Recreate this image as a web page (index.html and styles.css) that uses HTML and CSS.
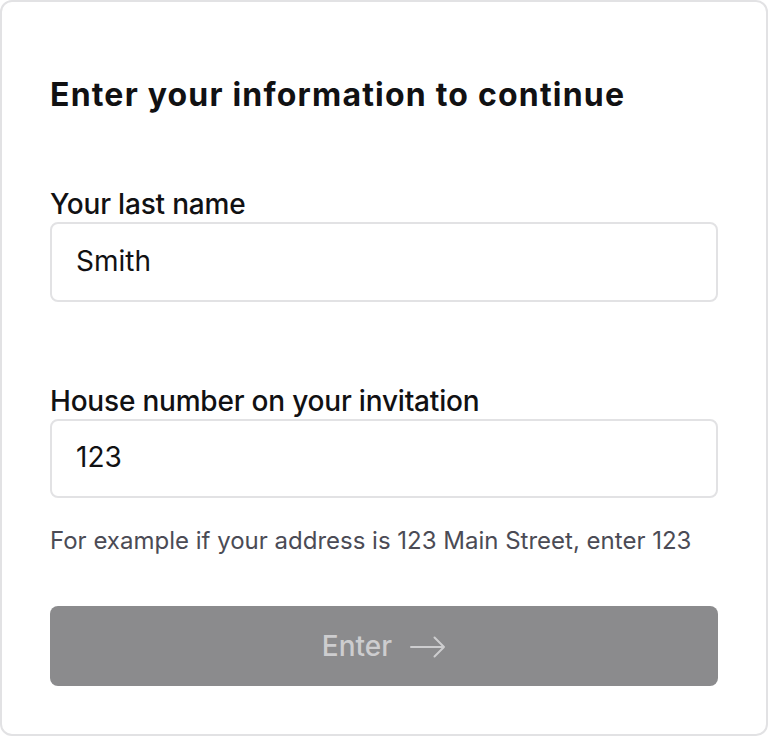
FILE: index.html
```html
<!DOCTYPE html>
<html lang="en">
<head>
  <meta charset="UTF-8">
  <title>Enter your information</title>
  <link rel="stylesheet" href="styles.css">
</head>
<body>
  <div class="card">
    <h1 class="title">Enter your information to continue</h1>

    <div class="field">
      <label for="lastname">Your last name</label>
      <input type="text" id="lastname" value="Smith">
    </div>

    <div class="field field-house">
      <label for="house">House number on your invitation</label>
      <input type="text" id="house" value="123">
      <p class="hint">For example if your address is 123 Main Street, enter 123</p>
    </div>

    <button class="submit" disabled>
      <span>Enter</span>
      <svg class="arrow" width="36" height="22" viewBox="0 0 36 22" fill="none">
        <path d="M1 11H34M24.5 1.5L34 11L24.5 20.5" stroke="currentColor" stroke-width="2" stroke-linecap="round" stroke-linejoin="round"/>
      </svg>
    </button>
  </div>
</body>
</html>
```

FILE: styles.css
```css
:root {
  --text-primary: #111113;
  --text-secondary: #4b4b55;
  --border: #e2e2e4;
  --button-disabled: #8b8b8d;
  --button-text: #cdcdcf;
}

* {
  margin: 0;
  padding: 0;
  box-sizing: border-box;
}

body {
  font-family: Inter, "Noto Sans", sans-serif;
  color: var(--text-primary);
  background: #ffffff;
}

.card {
  width: 768px;
  height: 736px;
  border: 2px solid var(--border);
  border-radius: 12px;
  padding: 73px 48px 0;
}

.title {
  font-size: 32px;
  font-weight: 700;
  line-height: 40px;
  letter-spacing: 1.2px;
  margin-bottom: 72px;
}

.field {
  display: flex;
  flex-direction: column;
}

label {
  font-size: 28px;
  font-weight: 500;
  line-height: 34px;
  letter-spacing: -0.2px;
  margin-bottom: 1px;
}

input {
  width: 100%;
  height: 80px;
  padding: 0 24px 3px;
  border: 2px solid var(--border);
  border-radius: 8px;
  font-family: inherit;
  font-size: 28px;
  color: var(--text-primary);
  background: #ffffff;
}

input:focus {
  outline: none;
}

.field-house {
  margin-top: 82px;
}

.field-house input {
  height: 79px;
}

.hint {
  margin-top: 28px;
  font-size: 24px;
  line-height: 30px;
  color: var(--text-secondary);
}

.submit {
  width: 100%;
  height: 80px;
  margin-top: 50px;
  border: none;
  border-radius: 8px;
  background-color: var(--button-disabled);
  color: var(--button-text);
  font-family: inherit;
  font-size: 28px;
  font-weight: 500;
  display: flex;
  align-items: center;
  justify-content: center;
  gap: 18px;
}

.arrow {
  margin-top: 2px;
}
```
